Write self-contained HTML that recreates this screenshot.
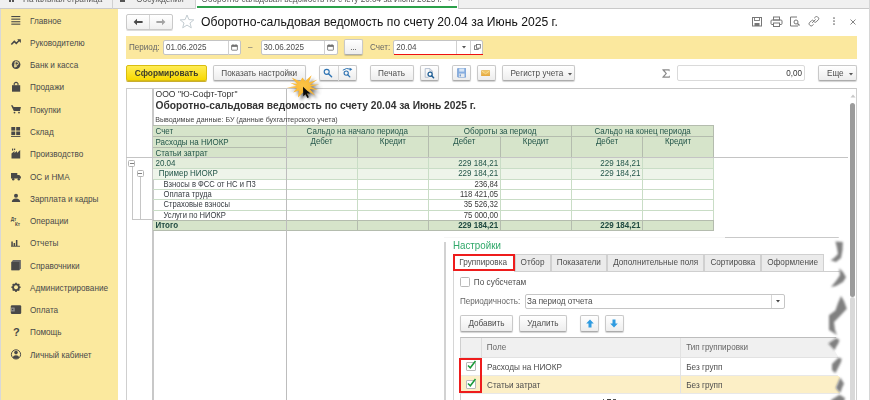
<!DOCTYPE html>
<html><head><meta charset="utf-8">
<style>
*{box-sizing:border-box}
html,body{margin:0;padding:0}
body{width:870px;height:400px;overflow:hidden;position:relative;background:#fff;font-family:"Liberation Sans",sans-serif;color:#4d4d4d}
.a{position:absolute}
.t{position:absolute;white-space:nowrap;line-height:10px;transform:scaleY(1.15)}
/* tab bar */
#tabs{left:0;top:0;width:870px;height:9px;background:#f0f0f0;border-bottom:1px solid #c9c9c9}
/* sidebar */
#side{left:0;top:9px;width:118px;height:391px;background:#fbe99e;border-left:1px solid #d8d8d8}
.si{position:absolute;left:30px;font-size:8.2px;color:#4a4a4a;white-space:nowrap;line-height:10px;transform:translateY(0.9px) scaleY(1.2)}
.ic{position:absolute;left:10px;width:12px;height:12px}
.btn{position:absolute;border:1px solid #c9c9c9;border-bottom-color:#acacac;border-radius:2px;background:linear-gradient(#ffffff,#ededed);box-shadow:0 1px 1px rgba(0,0,0,0.18);font-size:8.2px;color:#4d4d4d;text-align:center;line-height:14px;white-space:nowrap}
.btn span,.inp span{display:inline-block;transform:scaleY(1.15)}
.inp{position:absolute;border:1px solid #c4c4c4;border-radius:2px;background:#fff;font-size:8.1px;color:#4d4d4d;line-height:14px;padding-left:2px;white-space:nowrap}
</style></head><body>
<div id="tabs" class="a"></div>
<div class="a" style="left:112px;top:0;width:1px;height:8.5px;background:#d0d0d0"></div>
<div class="a" style="left:195px;top:0;width:1px;height:8.5px;background:#d0d0d0"></div>
<div class="a" style="left:196px;top:0;width:263px;height:8.5px;background:#fff;border-right:1px solid #d0d0d0"></div>
<div class="a" style="left:197px;top:6.2px;width:260px;height:1.5px;background:#2ca04a"></div>
<div class="a" style="left:869px;top:0;width:1px;height:400px;background:#d6d6d6"></div>

<div id="side" class="a"></div>
<div class="si" style="top:15.6px">Главное</div>
<div class="si" style="top:37.9px">Руководителю</div>
<div class="si" style="top:60.2px">Банк и касса</div>
<div class="si" style="top:82.4px">Продажи</div>
<div class="si" style="top:104.7px">Покупки</div>
<div class="si" style="top:127px">Склад</div>
<div class="si" style="top:149.2px">Производство</div>
<div class="si" style="top:171.5px">ОС и НМА</div>
<div class="si" style="top:193.8px">Зарплата и кадры</div>
<div class="si" style="top:216px">Операции</div>
<div class="si" style="top:238.3px">Отчеты</div>
<div class="si" style="top:260.6px">Справочники</div>
<div class="si" style="top:282.8px">Администрирование</div>
<div class="si" style="top:305.1px">Оплата</div>
<div class="si" style="top:327.4px">Помощь</div>
<div class="si" style="top:349.6px">Личный кабинет</div>


<!-- tab labels (cut off) -->
<div class="t" style="left:23px;top:-5.2px;font-size:8.2px;color:#555">Начальная страница</div>
<div class="a" style="left:9px;top:0;width:2px;height:2px;background:#555"></div><div class="a" style="left:12px;top:0;width:2px;height:2px;background:#555"></div>
<div class="t" style="left:136.2px;top:-5.2px;font-size:8.2px;color:#555">Обсуждения</div>
<div class="a" style="left:120px;top:0;width:5px;height:2px;background:#555"></div>
<div class="t" style="left:201.5px;top:-5.2px;font-size:8.2px;color:#555">Оборотно-сальдовая ведомость по счету 20.04 за Июнь 2025 г.</div>
<div class="t" style="left:448px;top:-5.2px;font-size:8.2px;color:#555">×</div>

<!-- header -->
<div class="a" style="left:126px;top:14px;width:47px;height:16px;border:1px solid #c9c9c9;border-radius:2px;background:linear-gradient(#fff,#f0f0f0);box-shadow:0 1px 0 #dcdcdc"></div>
<div class="a" style="left:149px;top:15px;width:1px;height:14px;background:#d6d6d6"></div>
<svg class="a" style="left:133px;top:18px" width="10" height="8" viewBox="0 0 10 8"><path d="M0.6 4 L4 0.8 V3 H9.6 V5 H4 V7.2 Z" fill="#4a4a4a"/></svg>
<svg class="a" style="left:156px;top:18px" width="10" height="8" viewBox="0 0 10 8"><path d="M9.4 4 L6 0.8 V3 H0.4 V5 H6 V7.2 Z" fill="#a3a3a3"/></svg>
<svg class="a" style="left:178.8px;top:14px" width="16" height="15" viewBox="0 0 16 15"><path d="M8 1 L9.9 5.6 L14.8 5.9 L11 9 L12.3 13.8 L8 11.1 L3.7 13.8 L5 9 L1.2 5.9 L6.1 5.6 Z" fill="none" stroke="#bcc6cc" stroke-width="0.9"/></svg>
<div class="t" style="left:201px;top:14.6px;font-size:12.16px;line-height:14px;color:#111;transform:scaleY(1.06)">Оборотно-сальдовая ведомость по счету 20.04 за Июнь 2025 г.</div>
<!-- header right icons -->
<svg class="a" style="left:751px;top:16px" width="12" height="11" viewBox="0 0 12 11"><rect x="1.5" y="1.5" width="9" height="8.5" fill="none" stroke="#777" stroke-width="1"/><rect x="3.5" y="1.5" width="5" height="3" fill="none" stroke="#777" stroke-width="0.9"/><rect x="3.5" y="7" width="5" height="3" fill="#777"/></svg>
<svg class="a" style="left:770px;top:16px" width="13" height="11" viewBox="0 0 13 11"><rect x="3.5" y="1" width="6" height="3" fill="none" stroke="#777" stroke-width="1"/><rect x="1" y="4" width="11" height="4.5" rx="1" fill="none" stroke="#777" stroke-width="1"/><rect x="3.5" y="7" width="6" height="3.5" fill="#fff" stroke="#777" stroke-width="1"/></svg>
<svg class="a" style="left:789px;top:16px" width="12" height="11" viewBox="0 0 12 11"><path d="M8 1 H1.5 V10 H9" fill="none" stroke="#777" stroke-width="1"/><circle cx="7" cy="6" r="2" fill="none" stroke="#777" stroke-width="1"/><path d="M8.5 7.5 L10.5 9.5" stroke="#777" stroke-width="1.2"/></svg>
<svg class="a" style="left:808px;top:16px" width="12" height="11" viewBox="0 0 12 11"><path d="M6.2 2.2 L7.6 0.9 Q8.6 0.1 9.6 0.9 L10.4 1.7 Q11.2 2.7 10.4 3.7 L8.2 5.9 Q7.2 6.8 6.2 5.9" fill="none" stroke="#777" stroke-width="1"/><path d="M5.6 8.3 L4.2 9.6 Q3.2 10.4 2.2 9.6 L1.4 8.8 Q0.6 7.8 1.4 6.8 L3.6 4.6 Q4.6 3.7 5.6 4.6" fill="none" stroke="#777" stroke-width="1"/><path d="M4.2 6.8 L7.6 3.5" stroke="#777" stroke-width="1"/></svg>
<svg class="a" style="left:831.5px;top:16px" width="4" height="11" viewBox="0 0 4 11"><circle cx="2" cy="2" r="0.85" fill="#666"/><circle cx="2" cy="5" r="0.85" fill="#666"/><circle cx="2" cy="8" r="0.85" fill="#666"/></svg>
<svg class="a" style="left:849.5px;top:18.5px" width="6" height="6" viewBox="0 0 6 6"><path d="M0.5 0.5 L5.5 5.5 M5.5 0.5 L0.5 5.5" stroke="#777" stroke-width="0.9"/></svg>

<!-- period bar -->
<div class="a" style="left:126px;top:36px;width:731px;height:23px;background:#fbe89e"></div>
<div class="t" style="left:129px;top:42.5px;font-size:8.1px;color:#666">Период:</div>
<div class="inp" style="left:163px;top:39.6px;width:78px;height:15.6px;line-height:14px"><span>01.06.2025</span></div>
<div class="a" style="left:227.5px;top:41px;width:1px;height:14px;background:#d0d0d0"></div>
<div class="t" style="left:248px;top:42.5px;font-size:8.1px;color:#777">–</div>
<div class="inp" style="left:260.5px;top:39.6px;width:77px;height:15.6px;line-height:14px"><span>30.06.2025</span></div>
<div class="a" style="left:324px;top:41px;width:1px;height:14px;background:#d0d0d0"></div>
<div class="btn" style="left:344px;top:39px;width:19px;height:16.3px;line-height:16px;font-size:8px"><span>...</span></div>
<div class="t" style="left:370px;top:42.5px;font-size:8.1px;color:#666">Счет:</div>
<div class="inp" style="left:393.2px;top:39.6px;width:90px;height:15.6px;line-height:14px"><span>20.04</span></div>
<div class="a" style="left:456px;top:41px;width:1px;height:14px;background:#d0d0d0"></div>
<div class="a" style="left:470px;top:41px;width:1px;height:14px;background:#d0d0d0"></div>
<div class="a" style="left:393.5px;top:53.9px;width:89.5px;height:1.4px;background:#ee1111"></div>

<!-- calendar icons -->
<svg class="a" style="left:230.5px;top:43.5px" width="7" height="7" viewBox="0 0 7 7"><rect x="0.6" y="1.2" width="5.8" height="5" rx="0.5" fill="none" stroke="#666" stroke-width="0.8"/><rect x="0.6" y="1.2" width="5.8" height="1.6" fill="#666"/><rect x="1.6" y="0.3" width="0.8" height="1.2" fill="#666"/><rect x="4.6" y="0.3" width="0.8" height="1.2" fill="#666"/></svg>
<svg class="a" style="left:327px;top:43.5px" width="7" height="7" viewBox="0 0 7 7"><rect x="0.6" y="1.2" width="5.8" height="5" rx="0.5" fill="none" stroke="#666" stroke-width="0.8"/><rect x="0.6" y="1.2" width="5.8" height="1.6" fill="#666"/><rect x="1.6" y="0.3" width="0.8" height="1.2" fill="#666"/><rect x="4.6" y="0.3" width="0.8" height="1.2" fill="#666"/></svg>
<svg class="a" style="left:461.5px;top:46.3px" width="4" height="3" viewBox="0 0 4 3"><path d="M0 0 H4 L2 2.5 Z" fill="#555"/></svg>
<svg class="a" style="left:474px;top:44px" width="7" height="6" viewBox="0 0 7 6"><rect x="0.5" y="1.8" width="3.8" height="3.7" fill="#fff" stroke="#666" stroke-width="0.8"/><rect x="2.5" y="0.5" width="3.8" height="3.7" fill="#fff" stroke="#666" stroke-width="0.8"/></svg>

<!-- toolbar -->
<div class="btn" style="left:126px;top:65px;height:16px;width:81px;line-height:15px;background:linear-gradient(#ffec55,#f8d900);border-color:#d9bd10;box-shadow:0 1px 0 #c9ae30;font-weight:bold;font-size:8.35px;color:#3c3c2a"><span>Сформировать</span></div>
<div class="btn" style="left:213px;top:65px;height:16px;width:92.5px;line-height:15px"><span>Показать настройки</span></div>
<div class="btn" style="left:318.5px;top:65px;height:16px;width:38px"></div>
<div class="a" style="left:337.5px;top:66px;width:1px;height:14.5px;background:#d6d6d6"></div>
<svg class="a" style="left:322px;top:67px" width="12" height="12" viewBox="0 0 12 12"><circle cx="4.7" cy="4.8" r="2.5" fill="none" stroke="#2f74b3" stroke-width="1.15"/><path d="M6.5 6.7 L9.6 9.8" stroke="#2f74b3" stroke-width="1.4" stroke-linecap="round"/></svg>
<svg class="a" style="left:341px;top:66px" width="13" height="13" viewBox="0 0 13 13"><path d="M1.8 4.2 Q5.5 1.2 9.6 3.3" fill="none" stroke="#2f74b3" stroke-width="1"/><path d="M8.6 1.8 L11.4 3.3 L8.8 5 Z" fill="#2f74b3"/><circle cx="5.2" cy="7.1" r="2.1" fill="none" stroke="#2f74b3" stroke-width="1.1"/><path d="M6.7 8.7 L8.8 10.9" stroke="#2f74b3" stroke-width="1.3" stroke-linecap="round"/></svg>
<div class="btn" style="left:369.5px;top:65px;height:16px;width:44px;line-height:15px"><span>Печать</span></div>
<div class="btn" style="left:420px;top:65px;height:16px;width:18.5px"></div>
<svg class="a" style="left:424px;top:68px" width="11" height="11" viewBox="0 0 11 11"><path d="M4.5 9.3 H1.2 V0.6 H5.8 L8.4 3.2 V4.6" fill="none" stroke="#a4b2c6" stroke-width="0.8"/><path d="M5.8 0.6 V3.2 H8.4" fill="none" stroke="#a4b2c6" stroke-width="0.6"/><circle cx="6.1" cy="6.3" r="2.1" fill="#fff" stroke="#1f5e94" stroke-width="1.3"/><path d="M7.6 7.8 L9.6 9.8" stroke="#1f5e94" stroke-width="1.5" stroke-linecap="round"/></svg>
<div class="btn" style="left:451.5px;top:65px;height:16px;width:19px"></div>
<svg class="a" style="left:456.5px;top:68.2px" width="9.5" height="9.5" viewBox="0 0 9.5 9.5"><rect x="0.3" y="0.3" width="8.9" height="8.9" rx="1" fill="#87aee0" stroke="#6f97cc" stroke-width="0.6"/><rect x="2.2" y="0.6" width="5" height="3" fill="#d6e5f6"/><rect x="1.9" y="5.6" width="5.6" height="3.4" fill="#e6ebf0"/><rect x="2.6" y="6.4" width="1.4" height="2" fill="#7a9cc8"/></svg>
<div class="btn" style="left:476.5px;top:65px;height:16px;width:19px"></div>
<svg class="a" style="left:481.3px;top:69.7px" width="9.2" height="6.8" viewBox="0 0 9.2 6.8"><defs><linearGradient id="ml" x1="0" y1="0" x2="0" y2="1"><stop offset="0" stop-color="#f6cf6e"/><stop offset="1" stop-color="#e3a43a"/></linearGradient></defs><rect x="0.3" y="0.3" width="8.6" height="6.2" rx="1" fill="url(#ml)" stroke="#d49a30" stroke-width="0.5"/><path d="M0.8 1 L4.6 3.8 L8.4 1" fill="none" stroke="#fbe6b0" stroke-width="0.7"/></svg>
<div class="btn" style="left:501.5px;top:65px;height:16px;width:73px;line-height:15px;text-align:left;padding-left:8px"><span>Регистр учета</span></div>
<svg class="a" style="left:567.5px;top:73px" width="4" height="3" viewBox="0 0 4 3"><path d="M0 0 H4 L2 2.5 Z" fill="#555"/></svg>
<svg class="a" style="left:661.5px;top:69px" width="8" height="9" viewBox="0 0 8 9"><path d="M0.3 0.3 H7.6 V2.2 H6.9 L6.6 1.4 H2.6 L5 4.5 L2.4 7.6 H6.8 L7.1 6.7 H7.8 V8.7 H0.3 V8.1 L3.5 4.6 L0.3 0.9 Z" fill="#8a8a8a"/></svg>
<div class="a" style="left:677px;top:65px;height:16px;width:127.5px;border:1px solid #dadada;border-radius:2px;background:#fff"></div>
<div class="t" style="left:760px;top:68.5px;width:42px;text-align:right;font-size:8.1px;color:#333">0,00</div>
<div class="btn" style="left:818px;top:65px;height:16px;width:39px;line-height:15px;text-align:left;padding-left:8px"><span>Еще</span></div>
<svg class="a" style="left:849px;top:73px" width="4" height="3" viewBox="0 0 4 3"><path d="M0 0 H4 L2 2.5 Z" fill="#555"/></svg>

<!-- report -->
<div class="a" style="left:126px;top:88px;width:731px;height:320px;border:1px solid #cfcfcf;border-top:1.5px solid #c8c8c8;background:#fff"></div>
<div class="a" style="left:152.0px;top:88.5px;width:1.5px;height:311.5px;background:#c8c8c8"></div>
<div class="a" style="left:153px;top:125.25px;width:560.7px;height:32.25px;background:#d6e4ca"></div>
<div class="a" style="left:153px;top:157.5px;width:560.7px;height:11.1px;background:#e3eddb"></div>
<div class="a" style="left:153px;top:168.6px;width:560.7px;height:10.4px;background:#eef4ea"></div>
<div class="a" style="left:153px;top:220px;width:560.7px;height:10.6px;background:#d6e4ca"></div>
<div class="a" style="left:153px;top:124.75px;width:560.7px;height:1px;background:#b4bcae"></div>
<div class="a" style="left:153px;top:136.0px;width:560.7px;height:1px;background:#b4bcae"></div>
<div class="a" style="left:153px;top:157.0px;width:560.7px;height:1px;background:#b4bcae"></div>
<div class="a" style="left:153px;top:136.0px;width:133px;height:1px;background:#b4bcae"></div>
<div class="a" style="left:153px;top:146.75px;width:133px;height:1px;background:#b4bcae"></div>
<div class="a" style="left:153px;top:168.1px;width:560.7px;height:1px;background:#c9ddc6"></div>
<div class="a" style="left:153px;top:178.5px;width:560.7px;height:1px;background:#c9ddc6"></div>
<div class="a" style="left:153px;top:188.9px;width:560.7px;height:1px;background:#c9ddc6"></div>
<div class="a" style="left:153px;top:199.1px;width:560.7px;height:1px;background:#c9ddc6"></div>
<div class="a" style="left:153px;top:209.5px;width:560.7px;height:1px;background:#c9ddc6"></div>
<div class="a" style="left:153px;top:219.5px;width:560.7px;height:1px;background:#b4bcae"></div>
<div class="a" style="left:153px;top:230.1px;width:560.7px;height:1px;background:#b4bcae"></div>
<div class="a" style="left:285.5px;top:125.25px;width:1px;height:32.25px;background:#b4bcae"></div>
<div class="a" style="left:285.5px;top:157.5px;width:1px;height:62.5px;background:#c9ddc6"></div>
<div class="a" style="left:285.5px;top:220px;width:1px;height:10.6px;background:#b4bcae"></div>
<div class="a" style="left:356.75px;top:136.5px;width:1px;height:21.0px;background:#b4bcae"></div>
<div class="a" style="left:356.75px;top:157.5px;width:1px;height:62.5px;background:#c9ddc6"></div>
<div class="a" style="left:356.75px;top:220px;width:1px;height:10.6px;background:#b4bcae"></div>
<div class="a" style="left:428.1px;top:125.25px;width:1px;height:32.25px;background:#b4bcae"></div>
<div class="a" style="left:428.1px;top:157.5px;width:1px;height:62.5px;background:#c9ddc6"></div>
<div class="a" style="left:428.1px;top:220px;width:1px;height:10.6px;background:#b4bcae"></div>
<div class="a" style="left:499.7px;top:136.5px;width:1px;height:21.0px;background:#b4bcae"></div>
<div class="a" style="left:499.7px;top:157.5px;width:1px;height:62.5px;background:#c9ddc6"></div>
<div class="a" style="left:499.7px;top:220px;width:1px;height:10.6px;background:#b4bcae"></div>
<div class="a" style="left:571.1px;top:125.25px;width:1px;height:32.25px;background:#b4bcae"></div>
<div class="a" style="left:571.1px;top:157.5px;width:1px;height:62.5px;background:#c9ddc6"></div>
<div class="a" style="left:571.1px;top:220px;width:1px;height:10.6px;background:#b4bcae"></div>
<div class="a" style="left:641.9px;top:136.5px;width:1px;height:21.0px;background:#b4bcae"></div>
<div class="a" style="left:641.9px;top:157.5px;width:1px;height:62.5px;background:#c9ddc6"></div>
<div class="a" style="left:641.9px;top:220px;width:1px;height:10.6px;background:#b4bcae"></div>
<div class="a" style="left:713.2px;top:125.25px;width:1px;height:32.25px;background:#b4bcae"></div>
<div class="a" style="left:713.2px;top:157.5px;width:1px;height:62.5px;background:#c9ddc6"></div>
<div class="a" style="left:713.2px;top:220px;width:1px;height:10.6px;background:#b4bcae"></div>
<div class="a" style="left:285.5px;top:88.5px;width:1px;height:311.5px;background:#bdbdbd"></div>
<div class="a" style="left:126px;top:156.9px;width:722px;height:1.2px;background:#c4c4c4"></div>
<div class="a" style="left:131.5px;top:166px;width:1px;height:53.5px;background:#c6c6c6"></div>
<div class="a" style="left:140.1px;top:176px;width:1px;height:43.5px;background:#c6c6c6"></div>
<div class="a" style="left:131.5px;top:218.8px;width:21.5px;height:1px;background:#c6c6c6"></div>
<div class="a" style="left:128.3px;top:160.2px;width:7.2px;height:7px;border:1px solid #b4b4b4;border-radius:1.5px;background:#fff"></div>
<div class="a" style="left:130px;top:163.2px;width:3.8px;height:1px;background:#808080"></div>
<div class="a" style="left:136.6px;top:170.4px;width:7.2px;height:7px;border:1px solid #b4b4b4;border-radius:1.5px;background:#fff"></div>
<div class="a" style="left:138.3px;top:173.4px;width:3.8px;height:1px;background:#808080"></div>
<div class="t" style="left:155.5px;top:88.7px;font-size:8.6px;color:#333;">ООО "Ю-Софт-Торг"</div>
<div class="t" style="left:155.5px;top:101.1px;font-size:10.24px;color:#333;font-weight:bold;">Оборотно-сальдовая ведомость по счету 20.04 за Июнь 2025 г.</div>
<div class="t" style="left:155.2px;top:114.5px;font-size:7.1px;color:#444;transform:scaleY(1.02);">Выводимые данные: БУ (данные бухгалтерского учета)</div>
<div class="t" style="left:155.5px;top:126.6px;font-size:8px;color:#24564a;">Счет</div>
<div class="t" style="left:155.5px;top:137.9px;font-size:8px;color:#24564a;">Расходы на НИОКР</div>
<div class="t" style="left:155.5px;top:148.6px;font-size:8px;color:#24564a;">Статьи затрат</div>
<div class="t" style="left:286px;top:126.6px;font-size:8px;color:#24564a;width:142.6px;text-align:center;">Сальдо на начало периода</div>
<div class="t" style="left:428.6px;top:126.6px;font-size:8px;color:#24564a;width:143.0px;text-align:center;">Обороты за период</div>
<div class="t" style="left:571.6px;top:126.6px;font-size:8px;color:#24564a;width:142.1px;text-align:center;">Сальдо на конец периода</div>
<div class="t" style="left:286px;top:137.2px;font-size:8px;color:#24564a;width:71.25px;text-align:center;">Дебет</div>
<div class="t" style="left:357.25px;top:137.2px;font-size:8px;color:#24564a;width:71.35px;text-align:center;">Кредит</div>
<div class="t" style="left:428.6px;top:137.2px;font-size:8px;color:#24564a;width:71.6px;text-align:center;">Дебет</div>
<div class="t" style="left:500.2px;top:137.2px;font-size:8px;color:#24564a;width:71.4px;text-align:center;">Кредит</div>
<div class="t" style="left:571.6px;top:137.2px;font-size:8px;color:#24564a;width:70.8px;text-align:center;">Дебет</div>
<div class="t" style="left:642.4px;top:137.2px;font-size:8px;color:#24564a;width:71.3px;text-align:center;">Кредит</div>
<div class="t" style="left:155.5px;top:158.6px;font-size:8px;color:#24564a;">20.04</div>
<div class="t" style="left:428.6px;top:158.6px;font-size:8px;color:#24564a;width:69.6px;text-align:right;">229 184,21</div>
<div class="t" style="left:571.6px;top:158.6px;font-size:8px;color:#24564a;width:68.8px;text-align:right;">229 184,21</div>
<div class="t" style="left:158.8px;top:169.1px;font-size:8px;color:#24564a;">Пример НИОКР</div>
<div class="t" style="left:428.6px;top:169.1px;font-size:8px;color:#24564a;width:69.6px;text-align:right;">229 184,21</div>
<div class="t" style="left:571.6px;top:169.1px;font-size:8px;color:#24564a;width:68.8px;text-align:right;">229 184,21</div>
<div class="t" style="left:163.5px;top:180.2px;font-size:7.62px;color:#353a40;">Взносы в ФСС от НС и П3</div>
<div class="t" style="left:428.6px;top:180.2px;font-size:7.75px;color:#3a3a3a;width:69.6px;text-align:right;">236,84</div>
<div class="t" style="left:163.5px;top:190.2px;font-size:7.62px;color:#353a40;">Оплата труда</div>
<div class="t" style="left:428.6px;top:190.2px;font-size:7.75px;color:#3a3a3a;width:69.6px;text-align:right;">118 421,05</div>
<div class="t" style="left:163.5px;top:200.4px;font-size:7.62px;color:#353a40;">Страховые взносы</div>
<div class="t" style="left:428.6px;top:200.4px;font-size:7.75px;color:#3a3a3a;width:69.6px;text-align:right;">35 526,32</div>
<div class="t" style="left:163.5px;top:210.6px;font-size:7.62px;color:#353a40;">Услуги по НИОКР</div>
<div class="t" style="left:428.6px;top:210.6px;font-size:7.75px;color:#3a3a3a;width:69.6px;text-align:right;">75 000,00</div>
<div class="t" style="left:155.5px;top:221.2px;font-size:8px;color:#1f4a40;font-weight:bold;">Итого</div>
<div class="t" style="left:428.6px;top:221.2px;font-size:8px;color:#1f4a40;font-weight:bold;width:69.6px;text-align:right;">229 184,21</div>
<div class="t" style="left:571.6px;top:221.2px;font-size:8px;color:#1f4a40;font-weight:bold;width:68.8px;text-align:right;">229 184,21</div>
<svg class="a" style="left:849.5px;top:94px" width="6" height="4" viewBox="0 0 6 4"><path d="M0.5 3.5 L3 0.5 L5.5 3.5 Z" fill="#c8c8c8"/></svg>
<div class="a" style="left:850px;top:297px;width:5px;height:110px;background:#d9d9d9;border-radius:2.5px"></div>
<div class="a" style="left:850px;top:102.8px;width:5px;height:194.5px;background:#9c9c9c;border-radius:2.5px"></div>

<!-- settings overlay -->
<div class="a" style="left:444px;top:237px;width:400px;height:170px;background:#fff"></div>
<div class="a" style="left:444px;top:236.5px;width:281px;height:1px;background:#f6f6f6"></div>
<div class="a" style="left:725px;top:236.6px;width:115px;height:1.2px;background:#c9c9c9"></div>
<div class="a" style="left:444px;top:242px;width:1.6px;height:160px;background:#d2d2d2"></div>
<div class="t" style="left:453px;top:239.8px;font-size:9.77px;line-height:12px;color:#2fa869;transform:scaleY(1.04)">Настройки</div>
<!-- tabs -->
<div class="a" style="left:514.5px;top:254px;width:36px;height:17px;background:#ebebeb;border:1px solid #d0d0d0;border-bottom:none"></div>
<div class="a" style="left:550.5px;top:254px;width:56.6px;height:17px;background:#ebebeb;border:1px solid #d0d0d0;border-bottom:none"></div>
<div class="a" style="left:607.1px;top:254px;width:97.2px;height:17px;background:#ebebeb;border:1px solid #d0d0d0;border-bottom:none"></div>
<div class="a" style="left:704.3px;top:254px;width:57.1px;height:17px;background:#ebebeb;border:1px solid #d0d0d0;border-bottom:none"></div>
<div class="a" style="left:761.4px;top:254px;width:62.5px;height:17px;background:#ebebeb;border:1px solid #d0d0d0;border-bottom:none"></div>
<div class="a" style="left:513.5px;top:270.5px;width:330px;height:1px;background:#cfcfcf"></div>
<div class="a" style="left:453px;top:253.6px;width:61.5px;height:17.6px;background:#fff;border:2px solid #ee1c1c"></div>
<div class="t" style="left:459.3px;top:257.6px;font-size:8.2px;color:#4d4d4d">Группировка</div>
<div class="t" style="left:514.5px;top:257.6px;width:36px;text-align:center;font-size:8.2px;color:#4d4d4d">Отбор</div>
<div class="t" style="left:550.5px;top:257.6px;width:56.6px;text-align:center;font-size:8.2px;color:#4d4d4d">Показатели</div>
<div class="t" style="left:607.1px;top:257.6px;width:97.2px;text-align:center;font-size:8.2px;color:#4d4d4d">Дополнительные поля</div>
<div class="t" style="left:704.3px;top:257.6px;width:57.1px;text-align:center;font-size:8.2px;color:#4d4d4d">Сортировка</div>
<div class="t" style="left:761.4px;top:257.6px;width:62.5px;text-align:center;font-size:8.2px;color:#4d4d4d">Оформление</div>
<div class="a" style="left:453px;top:271px;width:1px;height:135px;background:#d6d6d6"></div>
<!-- content -->
<div class="a" style="left:460.3px;top:277.1px;width:9.4px;height:9.5px;border:1px solid #b9b9b9;border-radius:1.5px;background:#fff"></div>
<div class="t" style="left:473.8px;top:277.8px;font-size:8.25px;color:#4d4d4d">По субсчетам</div>
<div class="t" style="left:459.9px;top:297px;font-size:8.1px;color:#666">Периодичность:</div>
<div class="a" style="left:524.5px;top:293.5px;width:260px;height:15px;border:1px solid #c6c6c6;border-radius:2px;background:#fff"></div>
<div class="a" style="left:771px;top:294.5px;width:1px;height:13px;background:#d6d6d6"></div>
<svg class="a" style="left:775.5px;top:299.5px" width="4" height="3" viewBox="0 0 4 3"><path d="M0 0 H4 L2 2.5 Z" fill="#444"/></svg>
<div class="t" style="left:527px;top:297px;font-size:8.1px;color:#4d4d4d">За период отчета</div>
<div class="btn" style="left:460px;top:315px;width:53px;line-height:15px"><span>Добавить</span></div>
<div class="btn" style="left:519.3px;top:315px;width:47.3px;line-height:15px"><span>Удалить</span></div>
<div class="btn" style="left:580.2px;top:315px;width:18.5px;height:16.5px"></div>
<div class="btn" style="left:605.1px;top:315px;width:18.5px;height:16.5px"></div>
<svg class="a" style="left:585.5px;top:318.5px" width="8" height="9" viewBox="0 0 8 9"><path d="M4 0.5 L7.8 4.5 H5.5 V8.5 H2.5 V4.5 H0.2 Z" fill="#2f9be0"/></svg>
<svg class="a" style="left:610.4px;top:318.5px" width="8" height="9" viewBox="0 0 8 9"><path d="M4 8.5 L7.8 4.5 H5.5 V0.5 H2.5 V4.5 H0.2 Z" fill="#2f9be0"/></svg>
<!-- grid -->
<div class="a" style="left:460px;top:337px;width:385px;height:20.2px;background:#f0f0f0;border-top:1px solid #bdbdbd;border-left:1px solid #cfcfcf"></div>
<div class="a" style="left:460px;top:357.1px;width:385px;height:18px;background:#fff;border-left:1px solid #cfcfcf;border-top:1px solid #e2e2e2"></div>
<div class="a" style="left:460px;top:375.1px;width:385px;height:18px;background:#fcefc6;border-left:1px solid #cfcfcf;border-top:1px solid #e8e8e8"></div>
<div class="a" style="left:460px;top:393px;width:385px;height:14px;background:#fff;border-left:1px solid #cfcfcf;border-top:1px solid #e8e8e8"></div>
<div class="a" style="left:481px;top:338px;width:1px;height:19px;background:#dcdcdc"></div>
<div class="a" style="left:680.3px;top:338px;width:1px;height:55px;background:#e2e2e2"></div>
<div class="t" style="left:486.8px;top:343.3px;font-size:8.1px;color:#666">Поле</div>
<div class="t" style="left:686.2px;top:343.3px;font-size:8.1px;color:#666">Тип группировки</div>
<div class="t" style="left:487px;top:362.5px;font-size:8.2px;color:#4d4d4d">Расходы на НИОКР</div>
<div class="t" style="left:686.2px;top:362.5px;font-size:8.2px;color:#4d4d4d">Без групп</div>
<div class="t" style="left:487px;top:380.5px;font-size:8.2px;color:#4d4d4d">Статьи затрат</div>
<div class="t" style="left:686.2px;top:380.5px;font-size:8.2px;color:#4d4d4d">Без групп</div>
<div class="a" style="left:466px;top:361.5px;width:10px;height:9.5px;border:1px solid #b9b9b9;border-radius:1px;background:#fff"></div>
<div class="a" style="left:466px;top:379.5px;width:10px;height:9.5px;border:1px solid #b9b9b9;border-radius:1px;background:#fff"></div>
<svg class="a" style="left:466px;top:359px" width="11" height="11" viewBox="0 0 11 11"><path d="M2 6.5 L4.3 8.8 L9.5 2" fill="none" stroke="#1a9a3a" stroke-width="1.5"/></svg>
<svg class="a" style="left:466px;top:377px" width="11" height="11" viewBox="0 0 11 11"><path d="M2 6.5 L4.3 8.8 L9.5 2" fill="none" stroke="#1a9a3a" stroke-width="1.5"/></svg>
<div class="a" style="left:459.3px;top:357.6px;width:22.4px;height:35.7px;border:2px solid #ee1c1c"></div>
<div class="a" style="left:603px;top:398.8px;width:1.2px;height:2px;background:#555"></div><div class="a" style="left:606.8px;top:398.5px;width:4.2px;height:2px;background:#444"></div><div class="a" style="left:613.2px;top:399px;width:2.5px;height:2px;background:#555"></div>

<!-- torn edge -->
<svg class="a" style="left:815px;top:230px" width="35" height="172" viewBox="0 0 35 172"><defs><filter id="tb" filterUnits="userSpaceOnUse" x="0" y="0" width="35" height="172"><feGaussianBlur stdDeviation="0.9"/></filter></defs><polygon points="25.0,6.0 20.4,11.5 22.0,18.0 23.0,24.0 19.0,28.0 15.6,30.2 21.0,34.0 24.2,38.3 25.0,45.0 21.0,51.0 16.0,57.0 21.0,62.0 26.0,66.0 23.0,73.0 20.4,80.4 14.0,85.3 14.0,100.0 21.3,104.8 21.3,108.0 13.1,113.5 19.6,120.3 23.7,127.6 17.0,134.0 17.0,140.0 20.0,143.0 25.2,147.5 20.7,158.0 25.2,163.0 24.5,164.7 16.0,170.0 16.0,172.0 33.0,172.0 33.0,6.0" fill="#fff"/><polygon points="20.4,11.5 27.8,12.0 27.5,20.0 26.0,28.0 21.0,32.0 15.6,30.2 19.0,28.0 23.0,24.0 22.0,18.0" fill="#808080" filter="url(#tb)"/><polygon points="24.2,38.3 28.0,42.0 31.0,47.3 28.0,52.0 21.0,56.0 16.0,57.0 21.0,51.0 25.0,45.0" fill="#808080" filter="url(#tb)"/><polygon points="26.0,66.0 29.0,71.0 31.8,78.8 25.0,86.0 19.0,92.0 20.0,100.0 22.0,105.0 14.0,100.0 14.0,85.3 20.4,80.4 23.0,73.0" fill="#808080" filter="url(#tb)"/><polygon points="24.5,110.0 23.0,114.0 21.0,117.0 19.6,120.3 13.1,113.5 21.3,108.0" fill="#808080" filter="url(#tb)"/><polygon points="26.7,128.7 26.0,132.0 21.0,142.0 20.0,143.0 17.0,140.0 17.0,134.0 23.7,127.6" fill="#808080" filter="url(#tb)"/><polygon points="25.2,147.5 29.0,153.5 27.0,158.0 25.2,163.0 20.7,158.0" fill="#808080" filter="url(#tb)"/><polygon points="24.5,164.7 30.0,168.0 29.0,172.0 16.0,172.0 16.0,170.0" fill="#808080" filter="url(#tb)"/></svg>

<!-- sidebar icons -->
<svg class="a" style="left:0;top:0" width="118" height="400" viewBox="0 0 118 400">
<g fill="#484848" stroke="none">
<rect x="11.3" y="16" width="9" height="1.1"/><rect x="11.3" y="18.6" width="9" height="1.1"/><rect x="11.3" y="21.2" width="9" height="1.1"/><rect x="11.3" y="23.6" width="9" height="1.1"/>
</g>
<path d="M11.3 44.6 L14.3 41.4 L16.3 43.4 L19.5 40" fill="none" stroke="#484848" stroke-width="1.5"/>
<path d="M17.2 39.2 L20.9 39.2 L20.9 42.9 Z" fill="#484848"/>
<circle cx="16.1" cy="64.6" r="4.3" fill="#484848"/>
<path d="M15 67.5 V61.8 H16.8 Q18.4 61.8 18.4 63.4 Q18.4 65 16.8 65 H14.2 M14.2 66.2 H17" fill="none" stroke="#fbe99e" stroke-width="1"/>
<path d="M12 85.2 H20.2 V91.7 H12 Z" fill="#484848"/>
<path d="M14.2 85.5 V83.5 Q16.1 81.2 18 83.5 V85.5" fill="none" stroke="#484848" stroke-width="1.1"/>
<path d="M11 105.3 H12.6 L13.6 107 H20.9 L20 111 H13.8 Z" fill="#484848"/>
<circle cx="14.5" cy="112.6" r="0.9" fill="#484848"/><circle cx="19" cy="112.6" r="0.9" fill="#484848"/>
<g fill="#484848"><rect x="11.3" y="127" width="3.9" height="3.6"/><rect x="16.2" y="127" width="3.9" height="3.6"/><rect x="11.3" y="131.5" width="3.9" height="3.6"/><rect x="16.2" y="131.5" width="3.9" height="3.6"/><rect x="11" y="136" width="9.4" height="0.9"/></g>
<path d="M11.5 158.5 V153.5 L14.5 151 V153 L17 151 V153 L20.2 150 V158.5 Z" fill="#484848"/>
<rect x="12" y="148.6" width="1.2" height="2" fill="#484848"/><rect x="14" y="148.6" width="1.2" height="1.5" fill="#484848"/>
<path d="M11 173 H17.3 V178.5 H11 Z M17.3 175 H19.3 L20.9 176.8 V178.5 H17.3 Z" fill="#484848"/>
<circle cx="13.2" cy="179.2" r="1.2" fill="#484848"/><circle cx="18.8" cy="179.2" r="1.2" fill="#484848"/>
<circle cx="16" cy="195.8" r="2" fill="#484848"/>
<path d="M11.8 202 Q12 198.5 16 198.5 Q20 198.5 20.2 202 Z" fill="#484848"/>
<text x="10.8" y="221.2" font-size="4.6" font-weight="bold" fill="#484848" font-family="Liberation Sans">Дт</text>
<text x="15" y="226.4" font-size="4.6" font-weight="bold" fill="#484848" font-family="Liberation Sans">Кт</text>
<g fill="#484848"><rect x="11.3" y="241.5" width="1.5" height="4.5"/><rect x="13.6" y="243" width="1.5" height="3"/><rect x="15.9" y="240" width="1.5" height="6"/><rect x="11" y="245.8" width="9" height="0.9"/></g>
<path d="M11.4 262 L13 260 H20.9 V268.3 L19.3 270.2 H11.4 Z" fill="#6a6a6a"/>
<rect x="11.4" y="262" width="7.9" height="8.2" fill="#484848"/>
<g transform="translate(16,287.3)"><circle r="3.1" fill="none" stroke="#484848" stroke-width="1.5"/>
<path d="M-0.8 -4.6 H0.8 V4.6 H-0.8 Z M-4.6 -0.8 V0.8 H4.6 V-0.8 Z" fill="#484848"/>
<path d="M-0.8 -4.6 H0.8 V4.6 H-0.8 Z M-4.6 -0.8 V0.8 H4.6 V-0.8 Z" fill="#484848" transform="rotate(45)"/>
<circle r="2" fill="#fbe99e"/></g>
<rect x="10.8" y="305.2" width="10.4" height="8.8" rx="1.2" fill="#484848"/>
<rect x="10.8" y="307.5" width="4" height="4" rx="0.6" fill="#8a8a8a"/><circle cx="12.6" cy="309.5" r="0.8" fill="#484848"/>
<text x="13" y="335.8" font-size="11" font-weight="bold" fill="#484848" font-family="Liberation Sans">?</text>
<circle cx="16" cy="354.4" r="4.6" fill="none" stroke="#484848" stroke-width="1"/>
<circle cx="16" cy="352.6" r="1.8" fill="#484848"/>
<path d="M12.6 357.6 Q13.5 355.2 16 355.2 Q18.5 355.2 19.4 357.6 Q16 360 12.6 357.6 Z" fill="#484848"/>
</svg>

<!-- burst + cursor -->
<svg class="a" style="left:280px;top:68px" width="50" height="40" viewBox="0 0 50 40">
<defs>
<filter id="sh" filterUnits="userSpaceOnUse" x="0" y="0" width="50" height="40"><feGaussianBlur stdDeviation="1.8"/></filter>
<radialGradient id="bg1" cx="50%" cy="45%" r="60%"><stop offset="0" stop-color="#fcc446"/><stop offset="1" stop-color="#f7ae2a"/></radialGradient>
</defs>
<path d="M10.0 14.8 L17.3 16.0 L11.6 9.6 L20.0 13.6 L22.4 9.6 L25.2 13.0 L31.6 7.2 L28.8 14.8 L37.6 11.6 L30.1 16.8 L39.2 16.4 L30.4 18.8 L38.0 22.0 L29.7 21.0 L35.2 27.6 L27.7 23.0 L27.6 28.4 L23.3 24.2 L18.0 29.6 L18.8 22.6 L13.2 24.4 L16.9 20.1 L6.8 19.6 L16.6 17.9 Z" fill="#555" opacity="0.8" filter="url(#sh)" transform="translate(2.5,3)"/>
<path d="M10.0 14.8 L17.3 16.0 L11.6 9.6 L20.0 13.6 L22.4 9.6 L25.2 13.0 L31.6 7.2 L28.8 14.8 L37.6 11.6 L30.1 16.8 L39.2 16.4 L30.4 18.8 L38.0 22.0 L29.7 21.0 L35.2 27.6 L27.7 23.0 L27.6 28.4 L23.3 24.2 L18.0 29.6 L18.8 22.6 L13.2 24.4 L16.9 20.1 L6.8 19.6 L16.6 17.9 Z" fill="url(#bg1)"/>
<path d="M23 18.8 L23.3 28.2 L25.4 26.2 L27.4 30 L28.9 29.3 L27 25.6 L30.2 25.4 Z" fill="#0a0a0a"/>
</svg>
</body></html>
